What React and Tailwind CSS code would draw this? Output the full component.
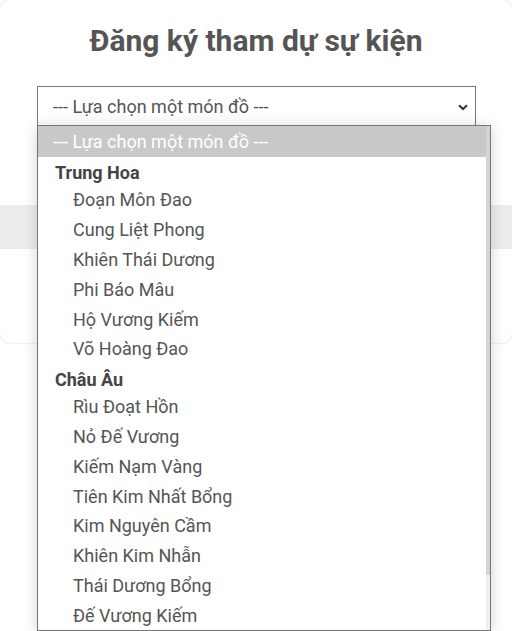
import React from "react";

const groups = [
  {
    label: "Trung Hoa",
    items: [
      "Đoạn Môn Đao",
      "Cung Liệt Phong",
      "Khiên Thái Dương",
      "Phi Báo Mâu",
      "Hộ Vương Kiếm",
      "Võ Hoàng Đao",
    ],
  },
  {
    label: "Châu Âu",
    items: [
      "Rìu Đoạt Hồn",
      "Nỏ Đế Vương",
      "Kiếm Nạm Vàng",
      "Tiên Kim Nhất Bổng",
      "Kim Nguyên Cầm",
      "Khiên Kim Nhẫn",
      "Thái Dương Bổng",
      "Đế Vương Kiếm",
    ],
  },
];

const App = () => {
  return (
    <div className="relative h-[631px] overflow-hidden bg-white font-['Roboto','Liberation_Sans',sans-serif]">
      {/* Event card */}
      <div className="h-[343px] rounded-[10px] bg-white shadow-[0_0_2px_rgba(0,0,0,0.2)]">
        <h1 className="pt-[23px] text-center text-[30px] leading-[36px] font-bold text-[#555]">
          Đăng ký tham dự sự kiện
        </h1>

        <div className="relative mx-[37px] mt-[27px] w-[439px]">
          <div className="flex h-[40px] items-center justify-between border border-[#767676] bg-white pl-[15px] pr-[7px]">
            <span className="text-[18px] text-[#555]">--- Lựa chọn một món đồ ---</span>
            <svg width="10" height="7" viewBox="0 0 10 7" className="mt-[2px]">
              <path d="M1 1.2 L5 5 L9 1.2" fill="none" stroke="#333" strokeWidth="2" />
            </svg>
          </div>

          {/* Open option list */}
          <div className="absolute left-0 top-[39px] z-10 flex h-[506px] w-[454px] border border-[#767676] bg-white shadow-[0_2px_14px_rgba(0,0,0,0.18)]">
            <div className="flex-1 overflow-hidden">
              <div className="flex h-[31px] items-center bg-[#c8c8c8] pl-[15px] text-[18px] text-white">
                --- Lựa chọn một món đồ ---
              </div>
              {groups.map((group) => (
                <div key={group.label}>
                  <div className="flex h-[28px] items-center pl-[17px] pt-[3px] text-[18px] font-bold text-[#444]">
                    {group.label}
                  </div>
                  {group.items.map((item) => (
                    <div
                      key={item}
                      className="flex h-[29.8px] items-center pl-[35px] text-[18px] text-[#555]"
                    >
                      {item}
                    </div>
                  ))}
                </div>
              ))}
            </div>
            <div className="w-[4px] bg-[#f0f0f0]">
              <div className="h-[449px] bg-[#d4d4d4]" />
            </div>
          </div>
        </div>

        <div className="mt-[79px] h-[44px] bg-[#ededed]" />
      </div>
    </div>
  );
};

export default App;
